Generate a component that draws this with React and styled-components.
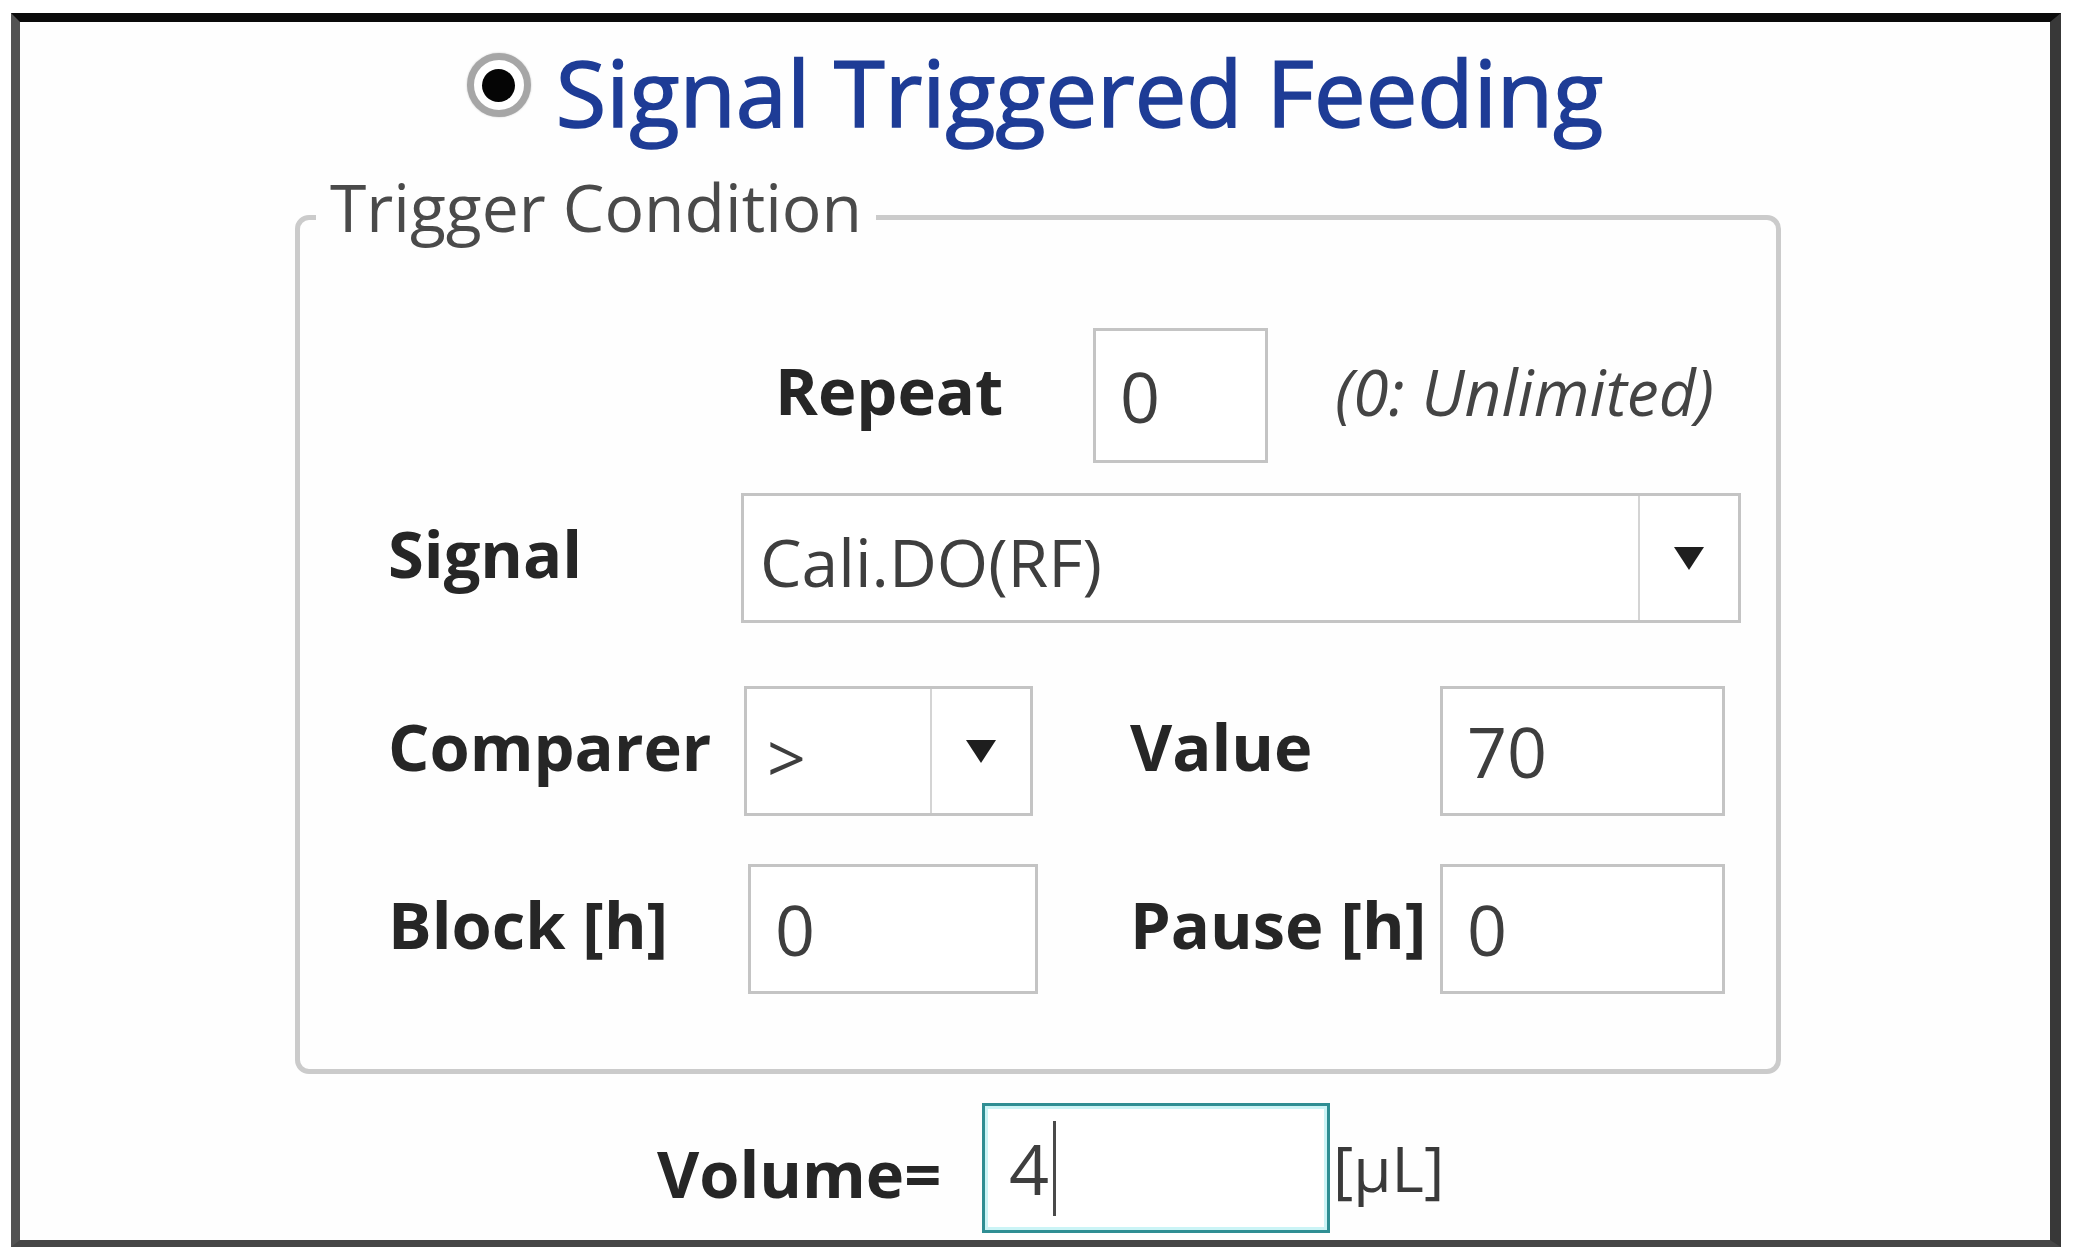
import React from 'react'
import styled, { createGlobalStyle } from 'styled-components'

const GlobalStyle = createGlobalStyle`
  html, body {
    margin: 0;
    padding: 0;
    background: #ffffff;
  }
  body {
    font-family: "Open Sans", "Noto Sans", "Liberation Sans", sans-serif;
  }
`

const Window = styled.div`
  box-sizing: border-box;
  margin: 13px 0 0 11px;
  width: 2050px;
  height: 1234px;
  border-style: solid;
  border-width: 9px 11px 7px 9px;
  border-color: #0a0a0a #383838 #464646 #525252;
  background: #fefefe;
  display: flex;
  flex-direction: column;
  align-items: center;
`

const Header = styled.div`
  display: flex;
  align-items: flex-start;
  gap: 25px;
  margin-top: 19px;
`

const Radio = styled.span`
  box-sizing: border-box;
  width: 64px;
  height: 64px;
  margin-top: 12px;
  border-radius: 50%;
  border: 7px solid #a6a6a6;
  background: #fff;
  box-shadow: 0 0 2px rgba(0, 0, 0, 0.25);
  display: flex;
  align-items: center;
  justify-content: center;
  &::after {
    content: '';
    width: 33px;
    height: 33px;
    border-radius: 50%;
    background: #050505;
  }
`

const Title = styled.h1`
  margin: 0;
  font-size: 92px;
  font-weight: 400;
  line-height: 101px;
  color: #1e3c96;
  -webkit-text-stroke: 1.6px #1e3c96;
  white-space: nowrap;
`

const Group = styled.fieldset`
  box-sizing: border-box;
  width: 1486px;
  margin: 25px 0 0 6px;
  padding: 0 0 75px 0;
  border: 5px solid #cbcbcb;
  border-radius: 14px;
  min-inline-size: 0;
`

const Legend = styled.legend`
  margin-left: 16px;
  padding: 0 14px 22px 14px;
  font-size: 66px;
  line-height: 79px;
  color: #4a4a4a;
  white-space: nowrap;
`

const RepeatRow = styled.div`
  display: flex;
  align-items: center;
  margin-top: 60px;
  padding-left: 475px;
`

const Row = styled.div`
  display: grid;
  grid-template-columns: 356px 386px 310px 302px;
  align-items: center;
  margin-top: ${p => p.$mt}px;
  padding-left: 88px;
`

const Label = styled.span`
  font-weight: 700;
  font-size: 65px;
  line-height: 1;
  color: #262626;
  white-space: nowrap;
  padding-bottom: 10px;
  width: ${p => (p.$w ? `${p.$w}px` : 'auto')};
`

const Field = styled.div`
  box-sizing: border-box;
  width: ${p => p.$w}px;
  height: ${p => p.$h || 130}px;
  margin-left: ${p => p.$nudge || 0}px;
  border: 3px solid ${p => (p.$focus ? '#2f8e93' : '#c4c4c4')};
  box-shadow: ${p => (p.$focus ? 'inset 0 0 0 3px #cbf4f6' : 'none')};
  background: #fff;
  display: flex;
  align-items: center;
  padding-left: 24px;
  font-size: 70px;
  line-height: 1;
  color: #3e3e3e;
`

const Combo = styled(Field)`
  padding-left: 0;
  grid-column: ${p => p.$span || 'auto'};
`

const ComboValue = styled.span`
  flex: 1;
  padding-left: ${p => p.$pad || 16}px;
  padding-top: ${p => p.$low || 0}px;
  font-size: ${p => p.$size || 66}px;
`

const ArrowCell = styled.span`
  align-self: stretch;
  width: 98px;
  border-left: 2px solid #d4d4d4;
  display: flex;
  align-items: center;
  justify-content: center;
  &::after {
    content: '';
    border-left: 15px solid transparent;
    border-right: 15px solid transparent;
    border-top: 23px solid #1e1e1e;
  }
`

const Note = styled.span`
  margin-left: 67px;
  padding-bottom: 8px;
  font-size: 64px;
  line-height: 1;
  font-style: italic;
  color: #444;
  white-space: nowrap;
`

const VolumeRow = styled.div`
  align-self: flex-start;
  display: flex;
  align-items: center;
  margin: 29px 0 0 637px;
`

const VolumeLabel = styled(Label)`
  padding-bottom: 0;
  padding-top: 10px;
`

const Caret = styled.span`
  width: 3px;
  height: 95px;
  margin-left: 4px;
  background: #4a4a4a;
`

const Unit = styled.span`
  margin-left: 3px;
  font-size: 62px;
  color: #3a3a3a;
`

export default function App() {
  return (
    <>
      <GlobalStyle />
      <Window>
        <Header>
          <Radio />
          <Title>Signal Triggered Feeding</Title>
        </Header>

        <Group>
          <Legend>Trigger Condition</Legend>

          <RepeatRow>
            <Label $w={318}>Repeat</Label>
            <Field $w={175} $h={135}>0</Field>
            <Note>(0: Unlimited)</Note>
          </RepeatRow>

          <Row $mt={30}>
            <Label>Signal</Label>
            <Combo $w={1000} $span="2 / 5" $nudge={-3}>
              <ComboValue $low={6}>Cali.DO(RF)</ComboValue>
              <ArrowCell />
            </Combo>
          </Row>

          <Row $mt={63}>
            <Label>Comparer</Label>
            <Combo $w={289}>
              <ComboValue $low={12} $pad={20} $size={68}>&gt;</ComboValue>
              <ArrowCell />
            </Combo>
            <Label>Value</Label>
            <Field $w={285}>70</Field>
          </Row>

          <Row $mt={48}>
            <Label>Block [h]</Label>
            <Field $w={290} $nudge={4}>0</Field>
            <Label>Pause [h]</Label>
            <Field $w={285}>0</Field>
          </Row>
        </Group>

        <VolumeRow>
          <VolumeLabel $w={325}>Volume=</VolumeLabel>
          <Field $w={348} $focus>
            4
            <Caret />
          </Field>
          <Unit>[µL]</Unit>
        </VolumeRow>
      </Window>
    </>
  )
}
